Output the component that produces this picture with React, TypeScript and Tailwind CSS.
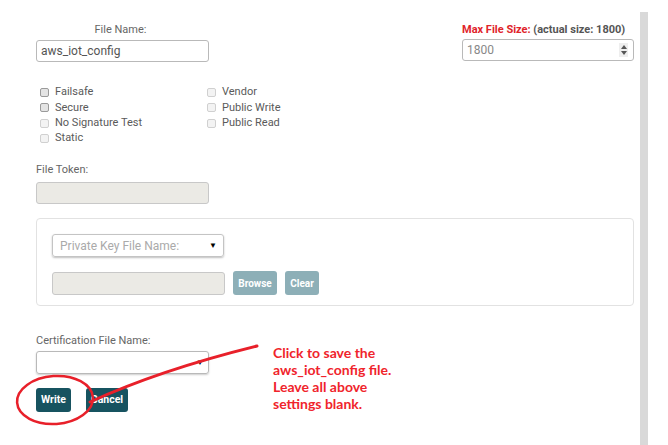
import React from 'react';

const font = { fontFamily: 'Roboto, "Liberation Sans", sans-serif' };

function Check({ label, dark }: { label: string; dark?: boolean }) {
  return (
    <div className="flex items-center h-[15.3px]">
      <span
        className={`w-[9px] h-[9px] rounded-[2px] border ${
          dark ? 'border-[#9a9a9a] bg-[#e4e4e4]' : 'border-[#d0d0d0] bg-[#f3f3f3]'
        }`}
      />
      <span className="ml-[6px] text-[11px] text-[#5a5a5a]">{label}</span>
    </div>
  );
}

export default function App() {
  return (
    <div className="relative w-[668px] h-[445px] bg-white overflow-hidden" style={font}>
      {/* scroll track on the right */}
      <div className="absolute left-[640px] top-[12px] w-[8px] h-[433px] bg-[#d9d9d9]" />

      <div className="pl-[36px] pt-[21px] w-[634px]">
        {/* file name / max size */}
        <div className="flex justify-between">
          <div className="w-[173px]">
            <div className="text-center text-[11px] leading-[17px] text-[#666] pr-[4px]">File Name:</div>
            <input
              readOnly
              value="aws_iot_config"
              className="mt-[1px] w-[173px] h-[22px] border border-[#b9b9b9] rounded-[3px] px-[4px] text-[12px] text-[#555] outline-none"
            />
          </div>
          <div className="w-[172px]">
            <div className="text-[11px] leading-[17px] font-bold text-[#555]">
              <span className="text-[#e0242a]">Max File Size:</span> (actual size: 1800)
            </div>
            <div className="mt-[1px] h-[22px] border border-[#b9b9b9] rounded-[3px] flex items-center justify-between pl-[4px] pr-[5px]">
              <span className="text-[12px] text-[#888]">1800</span>
              <span className="w-[9px] h-[14px] bg-[#eeeeee] flex flex-col items-center justify-center gap-[2px]">
                <span className="w-0 h-0 border-l-[3px] border-r-[3px] border-b-[4px] border-l-transparent border-r-transparent border-b-[#555]" />
                <span className="w-0 h-0 border-l-[3px] border-r-[3px] border-t-[4px] border-l-transparent border-r-transparent border-t-[#555]" />
              </span>
            </div>
          </div>
        </div>

        {/* checkboxes */}
        <div className="mt-[23px] pl-[4px] flex">
          <div className="w-[167px]">
            <Check label="Failsafe" dark />
            <Check label="Secure" dark />
            <Check label="No Signature Test" />
            <Check label="Static" />
          </div>
          <div>
            <Check label="Vendor" />
            <Check label="Public Write" />
            <Check label="Public Read" />
          </div>
        </div>

        {/* file token */}
        <div className="mt-[17px] text-[11px] leading-[14px] text-[#666]">File Token:</div>
        <div className="mt-[5px] w-[173px] h-[22px] border border-[#c8c8c8] rounded-[3px] bg-[#ebeae5]" />

        {/* private key panel */}
        <div className="mt-[14px] w-[598px] h-[88px] border border-[#e2e2e2] rounded-[4px] pl-[15px] pt-[15px]">
          <div className="w-[172px] h-[23px] border border-[#c4c4c4] rounded-[3px] shadow-[0_1px_2px_rgba(0,0,0,0.25)] flex items-center justify-between pl-[7px] pr-[6px]">
            <span className="text-[12px] text-[#aaa]">Private Key File Name:</span>
            <span className="text-[8px] text-black">▼</span>
          </div>
          <div className="mt-[14px] flex items-center">
            <div className="w-[173px] h-[23px] border border-[#c8c8c8] rounded-[3px] bg-[#ebeae5]" />
            <button className="ml-[8px] w-[44px] h-[24px] rounded-[3px] bg-[#8dafb7] text-white text-[10px] font-bold">
              Browse
            </button>
            <button className="ml-[8px] w-[34px] h-[24px] rounded-[3px] bg-[#8dafb7] text-white text-[10px] font-bold">
              Clear
            </button>
          </div>
        </div>

        {/* certification */}
        <div className="mt-[28px] text-[11px] leading-[14px] text-[#666]">Certification File Name:</div>
        <div className="mt-[3px] w-[173px] h-[23px] border border-[#b9b9b9] rounded-[3px] shadow-[0_1px_2px_rgba(0,0,0,0.2)] flex items-center justify-end pr-[4px]">
          <span className="text-[8px] text-black">▼</span>
        </div>

        <div className="mt-[14px] flex">
          <button className="w-[35px] h-[24px] rounded-[3px] bg-[#175360] text-white text-[10.5px] font-bold">Write</button>
          <button className="ml-[15px] w-[42px] h-[24px] rounded-[3px] bg-[#175360] text-white text-[10.5px] font-bold">Cancel</button>
        </div>
      </div>

      {/* annotation */}
      <svg className="absolute inset-0 pointer-events-none" width="668" height="445">
        <ellipse cx="55" cy="400" rx="38" ry="24" fill="none" stroke="#e8202a" strokeWidth="2.5" transform="rotate(-4 55 400)" />
        <path d="M257 346 Q160 370 90 402" fill="none" stroke="#e8202a" strokeWidth="3" strokeLinecap="round" />
      </svg>
      <div
        className="absolute left-[273px] top-[344px] text-[14px] leading-[17px] font-bold text-[#f0242c]"
        style={{ fontFamily: 'Lato, "Liberation Sans", sans-serif' }}
      >
        Click to save the
        <br />
        aws_iot_config file.
        <br />
        Leave all above
        <br />
        settings blank.
      </div>
    </div>
  );
}
